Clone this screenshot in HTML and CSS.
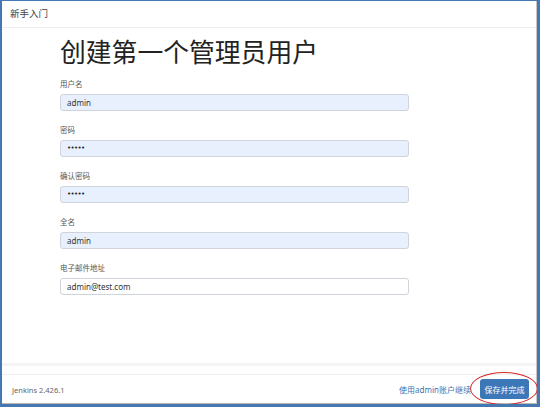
FILE: index.html
```html
<!DOCTYPE html>
<html lang="zh">
<head>
<meta charset="utf-8">
<link rel="stylesheet" href="styles.css">
</head>
<body>
<div class="frame">
  <div class="inner">
    <div class="header">新手入门</div>
    <div class="content">
      <h1 class="title">创建第一个管理员用户</h1>
      <div class="field">
        <label class="label">用户名</label>
        <div class="input auto">admin</div>
      </div>
      <div class="field">
        <label class="label">密码</label>
        <div class="input auto dots">•••••</div>
      </div>
      <div class="field">
        <label class="label">确认密码</label>
        <div class="input auto dots">•••••</div>
      </div>
      <div class="field">
        <label class="label">全名</label>
        <div class="input auto">admin</div>
      </div>
      <div class="field">
        <label class="label">电子邮件地址</label>
        <div class="input">admin@test.com</div>
      </div>
    </div>
    <div class="band"></div>
    <div class="footer">
      <span class="version">Jenkins 2.426.1</span>
      <div class="actions">
        <a class="link">使用admin账户继续</a>
        <span class="btn-wrap">
          <button class="btn">保存并完成</button>
          <span class="ring"></span>
        </span>
      </div>
    </div>
  </div>
</div>
</body>
</html>
```

FILE: styles.css
```css
* { box-sizing: border-box; }
html, body { margin: 0; padding: 0; background: #fff; }
body {
  font-family: "Noto Sans", "Noto Sans CJK SC", sans-serif;
  color: #333;
}
.frame {
  width: 540px;
  height: 407px;
  border-top: 1px solid #4577b0;
  border-left: 2px solid #4577b0;
  border-right: 3px solid #4577b0;
  border-bottom: 3px solid #4577b0;
  overflow: hidden;
}
.inner {
  height: 100%;
  border-right: 1px solid #c8c8c8;
  border-bottom: 1px solid #b8b8b8;
  display: flex;
  flex-direction: column;
}
.header {
  height: 27px;
  flex: none;
  border-bottom: 1px solid #eeeeee;
  font-size: 9.5px;
  line-height: 26px;
  padding-left: 8px;
  color: #444;
}
.content {
  flex: 1;
  padding: 9px 0 0 58px;
}
.title {
  margin: 0 0 11px 0;
  font-weight: 400;
  font-size: 25.8px;
  line-height: 30px;
  color: #222;
}
.field {
  margin-bottom: 13px;
  width: 349px;
}
.label {
  display: block;
  font-size: 7.5px;
  line-height: 12px;
  color: #555;
  margin-bottom: 4px;
}
.input {
  height: 17px;
  border: 1px solid #cfd4da;
  border-radius: 3px;
  background: #fff;
  font-size: 8px;
  line-height: 15px;
  padding-left: 6px;
  color: #333;
}
.input.auto { background: #e8f0fe; }
.input.dots {
  font-family: "DejaVu Sans", sans-serif;
  font-size: 7px;
  letter-spacing: -0.6px;
  color: #222;
}
.band {
  flex: none;
  height: 12px;
  border-top: 3px solid #f4f4f4;
  border-bottom: 1px solid #eeeeee;
}
.footer {
  flex: none;
  height: 28px;
  display: flex;
  align-items: center;
  justify-content: space-between;
  padding: 0 7px 0 10px;
}
.version {
  font-size: 7.5px;
  color: #666;
  padding-top: 1px;
}
.actions {
  display: flex;
  align-items: center;
  gap: 9px;
}
.link {
  font-size: 8px;
  color: #3a75b5;
}
.btn-wrap {
  position: relative;
  display: inline-block;
}
.btn {
  display: block;
  width: 49px;
  height: 20px;
  border: none;
  border-radius: 3px;
  background: #3c78b8;
  color: #fff;
  font-family: "Noto Sans CJK SC", sans-serif;
  font-size: 8px;
  padding: 0;
}
.ring {
  position: absolute;
  left: -10px;
  top: -7px;
  width: 68px;
  height: 33px;
  border: 1.5px solid #d42a2a;
  border-radius: 50%;
  pointer-events: none;
}
```
